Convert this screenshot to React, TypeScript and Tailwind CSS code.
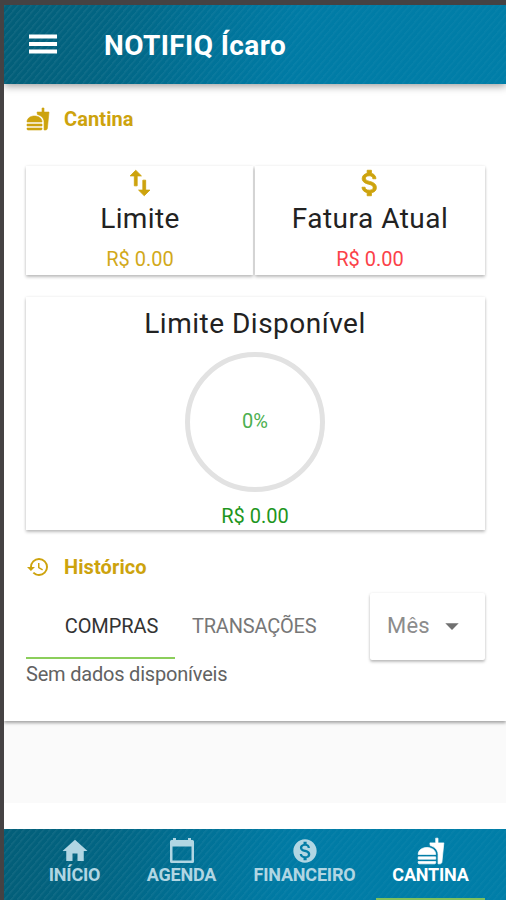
import React, {useState} from "react";
import {
    MdArrowDropDown,
    MdAttachMoney,
    MdFastfood,
    MdHistory,
    MdHome,
    MdImportExport,
    MdMonetizationOn,
} from "react-icons/md";

const stripes =
    "bg-[linear-gradient(97deg,transparent_20%,rgba(0,125,167,0.5)_75%),repeating-linear-gradient(130deg,rgba(255,255,255,0.05)_0px,rgba(255,255,255,0.05)_1px,transparent_2.5px,transparent_5px),linear-gradient(97deg,#035e78_0%,#016888_28%,#007aa4_58%,#007fa9_100%)]";

const cardShadow = "shadow-[0_2px_3px_rgba(0,0,0,0.25),0_0_3px_rgba(0,0,0,0.07)]";

// the first path of every Md icon is an empty 24x24 box, keep it unstroked
const bold = "stroke-[0.6] [&>path:first-child]:stroke-none";

function CalendarIcon({className}: {className?: string}) {
    return (
        <svg viewBox="0 0 26 26" className={className} fill="currentColor">
            <path
                fillRule="evenodd"
                d="M4 0h3v2h12V0h3v2h1.5A1.5 1.5 0 0 1 25 3.5v20a1.5 1.5 0 0 1-1.5 1.5h-21A1.5 1.5 0 0 1 1 23.5v-20A1.5 1.5 0 0 1 2.500 2H4zM3.500 8.500v14h19v-14z"
            />
        </svg>
    );
}

const navItems = [
    {label: "INÍCIO", Icon: MdHome, width: "w-[97px]", icon: "size-[30px] -my-px"},
    {label: "AGENDA", Icon: CalendarIcon, width: "w-[117px]", icon: "size-[26px] my-px"},
    {label: "FINANCEIRO", Icon: MdMonetizationOn, width: "w-[129px]", icon: "size-7"},
    {label: "CANTINA", Icon: MdFastfood, width: "ml-[7px] w-[109px]", icon: `size-7 ${bold}`},
];

function Header() {
    return (
        <header className={`relative flex h-[79px] shrink-0 items-center pl-[25px] pt-0.5 text-white shadow-[0_2px_8px_rgba(0,0,0,0.4)] ${stripes}`}>
            <button className="mb-1 flex">
                <svg viewBox="0 0 28 20" className="h-5 w-7" fill="currentColor">
                    <path d="M0 0.500h28v4H0zM0 8h28v4H0zM0 15.500h28v4H0z" />
                </svg>
            </button>
            <h1 className="ml-[47px] text-[28px] font-bold leading-8 tracking-[0.4px]">NOTIFIQ Ícaro</h1>
        </header>
    );
}

function SectionTitle({icon, children}: {icon: React.ReactNode; children: React.ReactNode}) {
    return (
        <div className="flex h-6 items-center gap-[14px] text-xl font-bold text-[#cda30d]">
            {icon}
            <span className="tracking-[0.1px]">{children}</span>
        </div>
    );
}

export default function App() {
    const [tab, setTab] = useState("compras");
    const [active, setActive] = useState("CANTINA");

    return (
        <div className="flex h-[900px] w-[506px] flex-col overflow-hidden border-l-[4px] border-t-[5px] border-[#454243] bg-white font-['Roboto',sans-serif]">
            <Header />

            <div className="h-[719px] shrink-0 bg-[#fafafa]">
                <main className="h-[637px] bg-white pl-[22px] pt-[23px] pr-[21px] shadow-[0_2px_3px_rgba(0,0,0,0.35)]">
                    <SectionTitle icon={<MdFastfood className={`size-6 ${bold}`} />}>Cantina</SectionTitle>

                    {/* Totals */}
                    <div className="mt-[35px] flex gap-[2px] text-center">
                        <div className={`flex h-[109px] w-[227px] flex-col items-center bg-white pl-px ${cardShadow}`}>
                            <MdImportExport className={`size-[34px] text-[#cda30d] ${bold}`} />
                            <h2 className="mt-px text-[28px] leading-9 tracking-[0.4px] text-[#222]">Limite</h2>
                            <p className="mt-[8px] text-xl leading-7 text-[#d2a91a]">R$ 0.00</p>
                        </div>
                        <div className={`flex h-[109px] flex-1 flex-col items-center bg-white ${cardShadow}`}>
                            <MdAttachMoney className={`size-[34px] text-[#cda30d] ${bold}`} />
                            <h2 className="mt-px text-[28px] leading-9 tracking-[0.5px] text-[#222]">Fatura Atual</h2>
                            <p className="mt-[8px] text-xl leading-7 text-[#fb4148]">R$ 0.00</p>
                        </div>
                    </div>

                    {/* Available limit */}
                    <div className={`mt-[22px] flex h-[233px] flex-col items-center bg-white pt-[9px] pr-px ${cardShadow}`}>
                        <h2 className="text-[28px] leading-9 tracking-[0.5px] text-[#222]">Limite Disponível</h2>
                        <div className="mt-[10px] flex size-[140px] items-center justify-center rounded-full border-[5px] border-[#e2e2e2] pb-0.5 text-xl text-[#4caf50]">
                            0%
                        </div>
                        <p className="mt-[10px] text-xl leading-7 text-[#1d961d]">R$ 0.00</p>
                    </div>

                    <div className="mt-[25px]">
                        <SectionTitle icon={<MdHistory className="size-6" />}>Histórico</SectionTitle>
                    </div>

                    {/* Tabs */}
                    <div className="mt-[14px] flex h-[67px] justify-between">
                        <div className="flex text-xl">
                            <button
                                className={`h-[66px] w-[149px] border-b-[2px] pl-[22px] pt-0.5 tracking-[-0.1px] ${
                                    tab === "compras" ? "border-[#8bce5b] text-[#333]" : "border-transparent text-[#777]"
                                }`}
                                onClick={() => setTab("compras")}
                            >
                                COMPRAS
                            </button>
                            <button
                                className={`h-[66px] border-b-[2px] px-[17px] pt-0.5 tracking-[-0.2px] ${
                                    tab === "transacoes" ? "border-[#8bce5b] text-[#333]" : "border-transparent text-[#777]"
                                }`}
                                onClick={() => setTab("transacoes")}
                            >
                                TRANSAÇÕES
                            </button>
                        </div>
                        <button className={`flex w-[115px] items-center rounded-[2px] bg-white pb-0.5 pl-[17px] text-[#8c8c8c] ${cardShadow}`}>
                            <span className="text-[22px] tracking-[0.2px]">Mês</span>
                            <MdArrowDropDown className="ml-1.5 size-8 text-[#707070]" />
                        </button>
                    </div>
                    <p className="text-xl leading-7 tracking-[-0.2px] text-[#626262]">Sem dados disponíveis</p>
                </main>
            </div>

            <div className="h-[26px] shrink-0 bg-white" />

            {/* Bottom navigation */}
            <nav className={`flex h-[71px] shrink-0 pl-[22px] ${stripes}`}>
                {navItems.map(({label, Icon, width, icon}) => (
                    <button
                        key={label}
                        className={`flex shrink-0 flex-col items-center border-b-2 pt-[8px] ${width} ${
                            active === label ? "border-[#7fc05c] text-white" : "border-transparent text-[#b1d6e3]"
                        }`}
                        onClick={() => setActive(label)}
                    >
                        <Icon className={icon} />
                        <span className="text-lg font-bold leading-5 tracking-[-0.2px]">{label}</span>
                    </button>
                ))}
            </nav>
        </div>
    );
}
